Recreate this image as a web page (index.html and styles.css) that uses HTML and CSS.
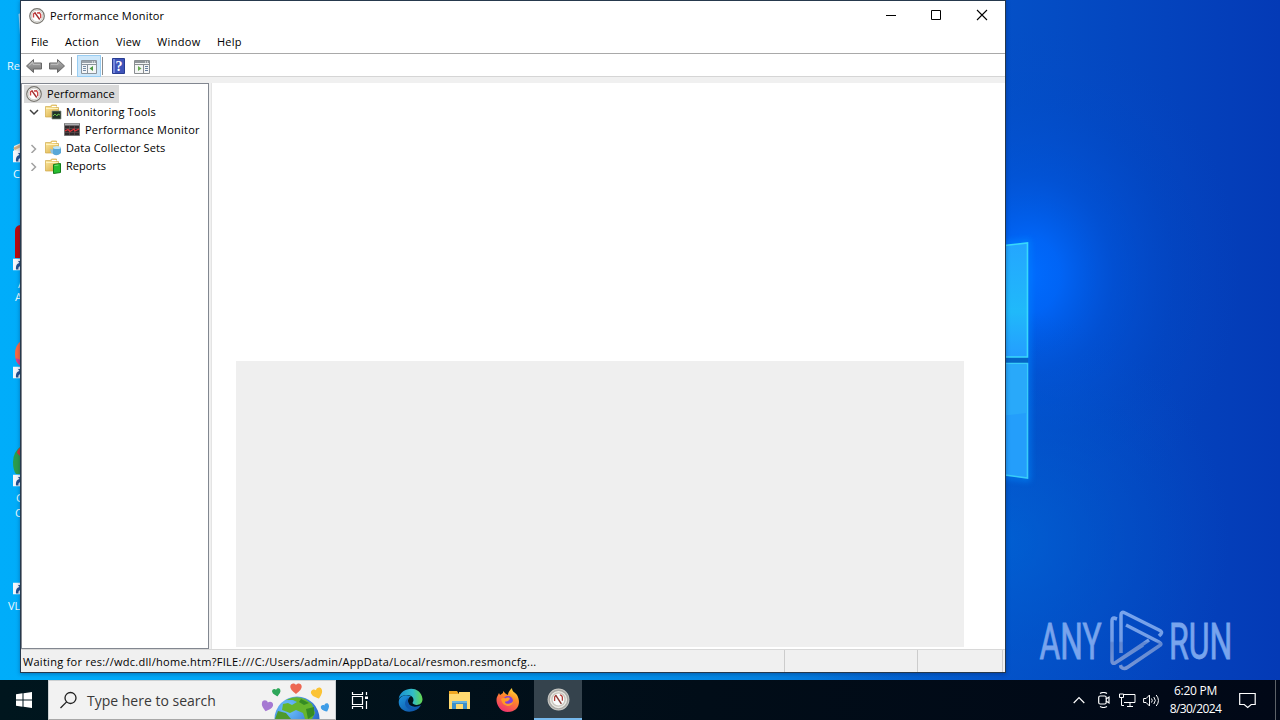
FILE: index.html
```
<!DOCTYPE html>
<html lang="en">
<head>
<meta charset="utf-8">
<title>Performance Monitor</title>
<link rel="stylesheet" href="styles.css">
</head>
<body>
<svg class="defs" width="0" height="0" aria-hidden="true">
  <defs>
    <linearGradient id="folderFill" x1="0" y1="0" x2="1" y2="1"><stop offset="0" stop-color="#ffeda6"/><stop offset="1" stop-color="#d5a53a"/></linearGradient>
    <linearGradient id="arrowFill" x1="0" y1="0" x2="0" y2="1"><stop offset="0" stop-color="#b5b5b5"/><stop offset="1" stop-color="#737373"/></linearGradient>
    <symbol id="gauge" viewBox="0 0 16 16">
      <circle cx="8" cy="8" r="7.300" fill="#f1f1ee" stroke="#77756f" stroke-width="1.200"/>
      <circle cx="8" cy="8" r="5.700" fill="#fff" stroke="#c8c6c2" stroke-width=".8"/>
      <path d="M4.500 9.500V6l2-1.300M8 5l2.500-.3 1.200 2v3.500" fill="none" stroke="#cd4646" stroke-width="1.400"/>
      <path d="M5.800 4.700l4.900 6.800" stroke="#a02d2d" stroke-width="1.400"/>
    </symbol>
    <symbol id="folder" viewBox="0 0 16 16">
      <path d="M.5 2.500h5l1-1.500h5v2.500h2v9.500H.5z" fill="url(#folderFill)" stroke="#d0aa4b" stroke-width=".7"/>
      <path d="M7 2.500h4.500" stroke="#fff" stroke-width="1"/>
      <path d="M1 4.500h12" stroke="#fff3bf" stroke-width="1"/>
    </symbol>
    <symbol id="shortcut" viewBox="0 0 12 12">
      <path d="M0 0h12v12H0z" fill="#f3f5fa"/>
      <path d="M3 11C2.500 7 4 5 6.500 4.500L5 2.500h6v6L9.200 7C6.500 7.500 5 8.500 5.500 11z" fill="#24508f"/>
    </symbol>
    <symbol id="heart" viewBox="0 0 12 11">
      <path d="M6 11C4 9 .3 7 .3 3.500.3.300 4.500-.7 6 2c1.500-2.700 5.700-1.700 5.700 1.500C11.700 7 8 9 6 11z"/>
    </symbol>
  </defs>
</svg>

<main class="desktop">
  <svg class="wallpaper" viewBox="0 0 1280 680" aria-hidden="true">
    <defs>
      <linearGradient id="base" x1="0" x2="1280" y1="0" y2="0" gradientUnits="userSpaceOnUse">
        <stop offset="0" stop-color="#00adfa"/><stop offset=".3" stop-color="#00a2f4"/><stop offset=".6" stop-color="#0381df"/><stop offset=".785" stop-color="#0450c7"/><stop offset="1" stop-color="#043ab6"/>
      </linearGradient>
      <radialGradient id="glow" cx="1028" cy="275" r="250" gradientUnits="userSpaceOnUse" gradientTransform="translate(1028 275) scale(.85 1) translate(-1028 -275)">
        <stop offset="0" stop-color="#006cff"/><stop offset=".15" stop-color="#0067fb" stop-opacity=".9"/><stop offset=".4" stop-color="#0058e4" stop-opacity=".5"/><stop offset=".7" stop-color="#004dd0" stop-opacity=".2"/><stop offset="1" stop-color="#0048c8" stop-opacity="0"/>
      </radialGradient>
      <radialGradient id="low" cx="1000" cy="540" r="230" gradientUnits="userSpaceOnUse">
        <stop offset="0" stop-color="#0064d6" stop-opacity=".75"/><stop offset="1" stop-color="#0050c8" stop-opacity="0"/>
      </radialGradient>
      <linearGradient id="pane" x1="0" x2="0" y1="243" y2="357" gradientUnits="userSpaceOnUse">
        <stop offset="0" stop-color="#24a6ff"/><stop offset=".6" stop-color="#20b9fa"/><stop offset="1" stop-color="#249dff"/>
      </linearGradient>
      <filter id="soft" x="-100%" y="-20%" width="300%" height="140%"><feGaussianBlur stdDeviation="3"/></filter>
    </defs>
    <path d="M0 0h1280v680H0z" fill="url(#base)"/>
    <path d="M780 0h500v560H780z" fill="url(#glow)"/>
    <path d="M770 300h510v380H770z" fill="url(#low)"/>
    <path d="M980 246l48-4v237l-48-6z" fill="none" stroke="#008cff" stroke-width="4" opacity=".75" filter="url(#soft)"/>
    <path d="M980 357h48v6h-48z" fill="#0565c5"/>
    <path d="M990 247l37.500-4v114H990z" fill="url(#pane)" stroke="#38d9fb" stroke-width="1.600"/>
    <path d="M990 363.500h37.500V478l-37.500-5z" fill="#249efb" stroke="#38cdf9" stroke-width="1.600"/>
    <path d="M990 364.500h36.500V413l-36.500 4z" fill="#29a9fa"/>
  </svg>

  <section class="shortcuts">
    <svg class="shortcut-art" viewBox="0 0 21 680" aria-hidden="true">
      <path d="M18.500 14l2.500-1v22l-1-.5z" fill="#9cd8f5"/>
      <path d="M14 146l7-3v12h-7z" fill="#e9e7df"/><path d="M13 148l8-4v3l-6 3z" fill="#cfad83"/>
      <path d="M21 225h-1q-5 1-5 6v27h6z" fill="#b90a0d"/>
      <path d="M21 341q-6 4-6 13t6 12z" fill="#fb6840"/><path d="M15.500 358l5.500 2v6q-4-2-5.500-8z" fill="#da3c91"/>
      <path d="M21 446q-8 6-8 16 0 8 3 12h5z" fill="#2b9c4d"/><path d="M21 447q-4 3-4 6l4 4z" fill="#d83436"/>
      <path d="M20.500 392v5" stroke="#5888a0" stroke-width="1"/>
      <use href="#shortcut" x="13" y="150.500" width="12" height="12"/>
      <use href="#shortcut" x="13" y="258.500" width="12" height="12"/>
      <use href="#shortcut" x="13" y="366.500" width="12" height="12"/>
      <use href="#shortcut" x="13" y="474.500" width="12" height="12"/>
      <use href="#shortcut" x="13" y="582.500" width="12" height="12"/>
    </svg>
    <span class="shortcut-label label-bin">Re</span>
    <span class="shortcut-label label-cc">C</span>
    <span class="shortcut-label label-acrobat">A</span>
    <span class="shortcut-label label-acrobat-2">A</span>
    <span class="shortcut-label label-google">G</span>
    <span class="shortcut-label label-chrome">C</span>
    <span class="shortcut-label label-vlc">VL</span>
  </section>

  <section class="window">
    <header class="titlebar">
      <svg class="app-icon" width="16" height="16"><use href="#gauge"/></svg>
      <h1 class="title">Performance Monitor</h1>
      <div class="caption-buttons">
        <svg width="46" height="29" viewBox="0 0 46 29"><path d="M18 14.500h10" stroke="#000"/></svg>
        <svg width="46" height="29" viewBox="0 0 46 29"><path d="M17.500 9.500h9v9h-9z" fill="none" stroke="#000"/></svg>
        <svg width="46" height="29" viewBox="0 0 46 29"><path d="M17 9l10 10M27 9L17 19" stroke="#000" stroke-width="1.100"/></svg>
      </div>
    </header>
    <nav class="menubar">
      <span class="menu-file">File</span><span class="menu-action">Action</span><span class="menu-view">View</span><span class="menu-window">Window</span><span class="menu-help">Help</span>
    </nav>
    <div class="toolbar">
      <svg class="tool-back" width="16" height="16" viewBox="0 0 16 16"><path d="M.5 8L7.500 1.500V5h8v6h-8v3.500z" fill="url(#arrowFill)" stroke="#686868"/><path d="M3 7.500l4-3.500v2.300h7" fill="none" stroke="#c2c2c2"/></svg>
      <svg class="tool-next" width="16" height="16" viewBox="0 0 16 16"><path d="M15.500 8L8.500 1.500V5h-8v6h8v3.500z" fill="url(#arrowFill)" stroke="#686868"/><path d="M2 6.300h7V4" fill="none" stroke="#c2c2c2"/></svg>
      <i class="tool-line"></i>
      <span class="tool-pressed"><svg width="16" height="14" viewBox="0 0 16 14"><path d="M.5.5h15v13H.5z" fill="#f4f5f7" stroke="#8a939c"/><path d="M1 2h14" stroke="#9ba2aa" stroke-width="2"/><path d="M11 2h1m1 0h1" stroke="#fff"/><path d="M1 4.500h14M6.500 5v8" stroke="#8a939c"/><path d="M2 6.500h3M2 8.500h3M2 10.500h3" stroke="#758ba5"/><path d="M12 6v5L8.500 8.500z" fill="#4b9741"/></svg></span>
      <i class="tool-line"></i>
      <svg class="tool-help" width="13" height="16" viewBox="0 0 13 16"><path d="M.5.5h12v15H.5z" fill="#3f54b9" stroke="#283c92"/><path d="M1 1h2v14H1z" fill="#7788db"/><text class="help-glyph" x="7" y="13" text-anchor="middle">?</text></svg>
      <svg class="tool-pane" width="16" height="14" viewBox="0 0 16 14"><path d="M.5.5h15v13H.5z" fill="#f4f5f5" stroke="#898d90"/><path d="M1 2h14" stroke="#909599" stroke-width="2"/><path d="M11 2h1m1 0h1" stroke="#fff"/><path d="M1 4.500h14M9.500 5v8" stroke="#898d90"/><path d="M11 6.500h3M11 8.500h3M11 10.500h3" stroke="#687f9d"/><path d="M4 6v5l3.500-2.500z" fill="#65a951"/></svg>
    </div>
    <div class="workspace">
      <aside class="tree">
        <div class="tree-row root"><svg width="16" height="16"><use href="#gauge"/></svg><span class="t-root">Performance</span></div>
        <div class="tree-row branch"><svg class="twisty" width="10" height="10" viewBox="0 0 10 10"><path d="M1 3l4 4 4-4" fill="none" stroke="#404040" stroke-width="1.500"/></svg><svg width="17" height="16" viewBox="0 0 17 16"><use href="#folder" width="16" height="16"/><path d="M7 7h9v8H7z" fill="#213326" stroke="#879185" stroke-width=".7"/><path d="M8 12l2-2 2 2 1-2 2 1" fill="none" stroke="#64b849"/></svg><span class="t-tools">Monitoring Tools</span></div>
        <div class="tree-row leaf"><svg width="16" height="13" viewBox="0 0 16 13"><path d="M.5.5h15v12H.5z" fill="#302a2c" stroke="#777"/><path d="M1 1.500h14" stroke="#b0b0b3" stroke-width="2"/><path d="M1 5.500h14M1 9.500h14M5.500 3v9M10.500 3v9" stroke="#665354" stroke-width=".6"/><path d="M1 8l3-1.500 2 2 4-2.500 1 2 4-2" fill="none" stroke="#e33439" stroke-width="1.200"/></svg><span class="t-monitor">Performance Monitor</span></div>
        <div class="tree-row branch"><svg class="twisty" width="10" height="10" viewBox="0 0 10 10"><path d="M2.500 2l4 4-4 4" fill="none" stroke="#a1a1a1" stroke-width="1.500"/></svg><svg width="17" height="16" viewBox="0 0 17 16"><use href="#folder" width="16" height="16"/><path d="M5 9l4 1v4l-3-1z" fill="#90c2df"/><path d="M8 7h8v6q-4 4-8 1z" fill="#59a7d7"/><ellipse cx="12" cy="7.500" rx="4" ry="1.500" fill="#c1e6f7"/></svg><span class="t-sets">Data Collector Sets</span></div>
        <div class="tree-row branch"><svg class="twisty" width="10" height="10" viewBox="0 0 10 10"><path d="M2.500 2l4 4-4 4" fill="none" stroke="#a1a1a1" stroke-width="1.500"/></svg><svg width="17" height="16" viewBox="0 0 17 16"><use href="#folder" width="16" height="16"/><path d="M8.500 6.500l7-1v9l-7 1z" fill="#27bd30" stroke="#137d1a"/><path d="M9.500 7.500l4-.5" stroke="#7be77c"/></svg><span class="t-reports">Reports</span></div>
      </aside>
      <article class="content"><div class="summary"></div></article>
    </div>
    <footer class="statusbar"><span class="status-text">Waiting for res://wdc.dll/home.htm?FILE:///C:/Users/admin/AppData/Local/resmon.resmoncfg...</span><i class="status-second"></i><i class="status-third"></i></footer>
  </section>

  <svg class="watermark" width="200" height="64" viewBox="0 0 200 64" role="img" aria-label="ANY RUN">
    <defs><linearGradient id="markFill" x1="0" x2="0" y1="2" y2="62" gradientUnits="userSpaceOnUse"><stop offset="0" stop-color="#78a4ed"/><stop offset=".5" stop-color="#739de5"/><stop offset=".53" stop-color="#6087d1"/><stop offset="1" stop-color="#7796d6"/></linearGradient></defs>
    <g class="mark-text" fill="url(#markFill)" stroke="url(#markFill)">
      <text transform="translate(3 59) scale(.66 1.080)" x="0" y="0" textLength="95" lengthAdjust="spacingAndGlyphs"></text>
      <text transform="translate(3.500 49.500) scale(.66 1.060)" x="0" y="0" textLength="94" lengthAdjust="spacingAndGlyphs">ANY</text>
      <text transform="translate(133 49.500) scale(.66 1.060)" x="0" y="0" textLength="96" lengthAdjust="spacingAndGlyphs">RUN</text>
    </g>
    <path d="M81 10l-3-1q-2 0-2 3v40q0 3 3 2l28-18M85 44V6q0-4 4-2l34 17q4 2 2 4l-2 2M90 16l33 17q4 2 0 4L92 58q-4 3-7 0l-.5-2M79 54L113 31" fill="none" stroke="url(#markFill)" stroke-width="3.500" stroke-linejoin="round"/>
  </svg>
</main>

<footer class="taskbar">
  <div class="start"><svg width="16" height="16" viewBox="0 0 16 16"><path d="M0 2.200l6.500-.9v6.200H0zM7.500 1.200L16 0v7.500H7.500zM0 8.500h6.500v6.200L0 13.800zM7.500 8.500H16V16l-8.500-1.200z" fill="#fff"/></svg></div>
  <div class="search">
    <svg class="search-icon" width="18" height="18" viewBox="0 0 18 18"><circle cx="10.500" cy="7" r="5.500" fill="none" stroke="#222" stroke-width="1.300"/><path d="M6.600 10.900L.5 17" stroke="#222" stroke-width="1.300"/></svg>
    <span class="search-text">Type here to search</span>
    <svg class="search-art" width="72" height="38" viewBox="0 0 72 38" aria-hidden="true">
      <defs><radialGradient id="ocean" cx=".3" cy=".25" r=".8"><stop offset="0" stop-color="#6fc5ff"/><stop offset="1" stop-color="#235fc5"/></radialGradient></defs>
      <circle cx="36" cy="38" r="22.500" fill="url(#ocean)"/>
      <path d="M25 19Q34 14 44 18l7 5 3 9-3 6h-7l-2-6-7-3-6 3-8-3 1-6 5-1 4 2 5-3-4-2z" fill="#66b52d"/>
      <path d="M40 18l8 4-5 2-5-3zM45 28l8-2v8l-6 4z" fill="#358b24"/>
      <path d="M17 30l8 2 5 6H14z" fill="#4e9a2c"/>
      <use href="#heart" x="28.500" y="2" width="13" height="11" fill="#ed6752"/>
      <use href="#heart" x="11" y="7" width="9" height="9" fill="#2fa75a" transform="rotate(-12 15 11)"/>
      <use href="#heart" x="50" y="7" width="12" height="11" fill="#fbc334" transform="rotate(-20 56 12)"/>
      <use href="#heart" x="0" y="19" width="12" height="12" fill="#a679d2" transform="rotate(14 6 25)"/>
      <use href="#heart" x="60" y="22" width="9" height="10" fill="#3e9de7" transform="rotate(-24 64 27)"/>
    </svg>
  </div>
  <div class="task"><svg width="18" height="17" viewBox="0 0 18 17" fill="none" stroke="#fff" stroke-width="1.200"><path d="M1.500 0v2.500h10V0M1.500 17v-2.500h10V17M1.500 4.500h10v8h-10zM15.500 0v3M15.500 9v8"/><path d="M14 4.500h3v2.500h-3z" fill="#fff" stroke="none"/></svg></div>
  <div class="task edge-task"><svg width="25" height="25" viewBox="0 0 25 25"><defs><linearGradient id="edgeTop" x1="0" x2="1"><stop stop-color="#178ed2"/><stop offset=".6" stop-color="#32bcc8"/><stop offset="1" stop-color="#64d84d"/></linearGradient><linearGradient id="edgeBody" x1="0" y1="0" x2="1" y2="1"><stop stop-color="#1d97dd"/><stop offset="1" stop-color="#0c4aa0"/></linearGradient></defs><path d="M1 12C-1 20 8 27 18 22c2-1 4-3 5-5-5 3-13 2-13-4 0-2 1-4 3-5-5-2-11 0-12 4z" fill="url(#edgeBody)"/><path d="M.6 11C3-2 23-3 24.500 11c0 6-6 7-9 5-2-1 0-2 0-4 0-7-12-6-15-1z" fill="url(#edgeTop)"/><path d="M10 10c-8 7 2 16 11 10-5 1-12-1-11-10z" fill="#105aaf"/></svg></div>
  <div class="task explorer-task"><svg width="23" height="20" viewBox="0 0 23 20"><path d="M1 1h8l2 3h11v15H1z" fill="#f0a823"/><path d="M11 2h11v3H11zM1 4h21v15H1z" fill="#ffd970"/><path d="M4 11h15v8h-4v-5H8v5H4z" fill="#3d8fc9"/><path d="M4 11h15v2H4z" fill="#68b3df"/></svg></div>
  <div class="task firefox-task"><svg width="24" height="25" viewBox="0 0 24 25"><defs><linearGradient id="fox" x1=".8" y1="0" x2=".3" y2="1"><stop stop-color="#ffe13b"/><stop offset=".4" stop-color="#ff8a28"/><stop offset="1" stop-color="#f02f72"/></linearGradient></defs><path d="M3 5l1 2 3-2V3l3 3 2 1c0-3 2-5 4-7 0 4 3 4 5 7 5 9 0 17-9 17C3 24-1 14 1 9z" fill="url(#fox)"/><circle cx="12" cy="13" r="5" fill="#8240d9"/><path d="M5 11c2-2 4 0 5-1 3-1 5 0 3 2-1 2-4 1-4 2 0 3 7 2 8-1 1 6-10 8-12-2z" fill="#ff9a27"/></svg></div>
  <div class="task active-task"><svg width="23" height="23" viewBox="0 0 16 16"><circle cx="8" cy="8" r="7.600" fill="#c8c8c4"/><circle cx="8" cy="8" r="6.500" fill="#eceae4" stroke="#aaa9a5"/><circle cx="8" cy="8" r="4.600" fill="#fafafa" stroke="#c9c7bf"/><path d="M5.300 9V6.300L6.300 5m2.700-.3 1.200.7.5 1v2.500" fill="none" stroke="#b23d37" stroke-width=".9"/><path d="M6 5l4 6" stroke="#893b34" stroke-width="1"/></svg></div>
  <div class="tray">
    <svg class="tray-up" width="12" height="8" viewBox="0 0 12 8"><path d="M.7 7L6 1.500 11.300 7" fill="none" stroke="#fff" stroke-width="1.200"/></svg>
    <svg class="tray-meet" width="12" height="16" viewBox="0 0 12 16" fill="none" stroke="#fff" stroke-width="1.200"><path d="M2 1.500Q5.500-.5 9 1.500M2 14.500q3.500 2 7 0"/><rect x=".7" y="4" width="7.500" height="8" rx="1.500"/><path d="M8 7l3-2v6L8 9"/></svg>
    <svg class="tray-net" width="17" height="14" viewBox="0 0 17 14" fill="none" stroke="#fff"><path d="M5 1.500h11v8H5M8 13.500h6M11 10v3M2.500 5v7.500H5"/><path d="M.5 1h4v3.500h-4z"/></svg>
    <svg class="tray-sound" width="17" height="13" viewBox="0 0 17 13" fill="none" stroke="#fff"><path d="M.6 4.500h2.500L6.500 1v11L3.100 8.500H.6z"/><path d="M8.500 4.500q1.500 2 0 4M10.800 3q3 3.500 0 7M13.200 1q4.500 5.500 0 11"/></svg>
    <div class="clock"><span class="clock-time">6:20 PM</span><span class="clock-date">8/30/2024</span></div>
    <svg class="tray-note" width="17" height="17" viewBox="0 0 17 17"><path d="M.7 1.500h15.500v11h-4l-3.500 3-3.500-3H.7z" fill="none" stroke="#fff" stroke-width="1.200"/></svg>
    <i class="show-desktop"></i>
  </div>
</footer>
</body>
</html>
```
FILE: styles.css
```
* { box-sizing: border-box; }
body {
  margin: 0;
  width: 1280px;
  height: 720px;
  overflow: hidden;
  display: flex;
  flex-direction: column;
  background: #00111b;
  font: 11px/18px "Open Sans", "Noto Sans", sans-serif;
  color: #000;
}
svg { display: block; flex: none; }
.defs { position: absolute; }
.desktop { position: relative; flex: 1; overflow: hidden; }
.wallpaper { width: 1280px; height: 680px; }

/* Desktop items, partly covered by the open window */
.shortcuts { position: absolute; inset: 0 auto 0 0; width: 74px; color: #effaff; font-size: 11px; line-height: 14px; }
.shortcut-art { width: 21px; height: 680px; }
.shortcut-label { position: absolute; }
.label-bin { left: 7px; top: 59px; }
.label-cc { left: 13px; top: 167px; }
.label-acrobat { left: 18px; top: 277px; }
.label-acrobat-2 { left: 15px; top: 290px; }
.label-google { left: 16px; top: 491px; }
.label-chrome { left: 15px; top: 506px; }
.label-vlc { left: 8px; top: 599px; }

/* Application window */
.window { position: absolute; left: 20px; top: 0; width: 986px; height: 673px; display: flex; flex-direction: column; background: #fff; border: 1px solid #26394d; box-shadow: 0 1px 4px #001b5560; }
.titlebar { height: 30px; display: flex; align-items: center; padding-left: 8px; }
.title { margin: 0 0 0 5px; font: inherit; letter-spacing: .2px; }
.caption-buttons { margin: 0 -1px 0 auto; display: flex; align-self: flex-start; }
.menubar { height: 22px; display: flex; align-items: center; padding-left: 10px; gap: 16px; }
.menubar span { display: block; white-space: nowrap; }
.menu-file { width: 18px; }
.menu-action { width: 35px; letter-spacing: .35px; }
.menu-view { width: 25px; letter-spacing: .2px; }
.menu-window { width: 44px; letter-spacing: .35px; }
.menu-help { letter-spacing: .2px; }
.toolbar { height: 24px; border-top: 1px solid #a9a9a9; border-bottom: 1px solid #d5d5d5; display: flex; align-items: center; padding: 1px 0 0 5px; }
.tool-next { margin-left: 7px; }
.tool-line { width: 1px; height: 18px; background: #8c8c8c; margin-left: 6px; }
.tool-pressed { width: 24px; height: 22px; margin-left: 5px; padding-top: 2px; display: flex; align-items: center; justify-content: center; border: 1px solid #99cdf2; background: #cde7fa; }
.tool-pressed + .tool-line { margin-left: 1px; }
.tool-help { margin-left: 9px; }
.help-glyph { font: bold 14px "Liberation Serif", serif; fill: #fff; }
.tool-pane { margin: 2px 0 0 9px; }
.workspace { flex: 1; min-height: 0; background: #f0f0f0; padding-top: 6px; display: flex; }
.tree { width: 188px; background: #fff; border: 1px solid #828790; padding-top: 1px; }
.tree-row { height: 18px; display: flex; align-items: center; white-space: nowrap; }
.root { width: 95px; margin-left: 2px; padding-left: 2px; gap: 5px; background: #d9d9d9; }
.branch { padding-left: 7px; gap: 4px; }
.branch svg:nth-child(2) { margin-left: 2px; }
.leaf { padding-left: 42px; gap: 5px; }
.leaf svg { margin-top: -1px; }
.t-root { letter-spacing: .1px; }
.t-tools { letter-spacing: .2px; }
.t-monitor { letter-spacing: .22px; }
.t-sets { letter-spacing: .14px; }
.content { margin-left: 2px; flex: 1; background: #fff; border-left: 1px solid #e4e4e4; padding: 278px 41px 2px 24px; }
.summary { height: 286px; background: #efefef; }
.statusbar { height: 23px; background: #f0f0f0; border-top: 1px solid #d8d8d8; display: flex; align-items: stretch; padding-right: 2px; }
.status-text { width: 763px; padding: 3px 0 0 2px; white-space: nowrap; letter-spacing: .285px; }
.status-second { width: 133px; border-left: 1px solid #ccc; }
.status-third { flex: 1; border-left: 1px solid #ccc; border-right: 1px solid #ccc; }
.watermark { position: absolute; left: 1036px; top: 609px; }
.mark-text { font: 47px Roboto, sans-serif; stroke-width: .8px; }

/* Taskbar */
.taskbar { height: 40px; display: flex; background: linear-gradient(90deg, #00161e, #010d18 55%, #010817); color: #fff; }
.start { width: 48px; display: flex; align-items: center; justify-content: center; }
.search { width: 288px; height: 40px; background: #f2f2f2; border: 1px solid #ccd0d2; border-bottom-color: #a8a8a8; display: flex; align-items: center; }
.search-icon { margin-left: 11px; }
.search-text { width: 164px; margin: 2px 0 0 9px; color: #393939; font-size: 14px; white-space: nowrap; }
.search-art { margin-left: 10px; }
.task { width: 48px; display: flex; align-items: center; justify-content: center; }
.edge-task, .explorer-task, .firefox-task { width: 49px; }
.edge-task { margin-left: 2px; }
.firefox-task { width: 50px; padding-right: 3px; }
.explorer-task { padding-right: 1px; }
.active-task { background: #35434d; border-bottom: 2px solid #76b9ed; }
.tray { margin-left: auto; display: flex; align-items: center; }
.tray-meet { margin-left: 13px; }
.tray-net { margin-left: 9px; }
.tray-sound { margin-left: 7px; }
.clock { width: 71px; display: flex; flex-direction: column; align-items: center; font-size: 12px; }
.clock-time { letter-spacing: -.25px; }
.clock-date { letter-spacing: -.6px; }
.tray-note { margin-left: 8px; }
.show-desktop { width: 5px; height: 40px; margin-left: 19px; border-left: 1px solid #5d6268; }
```
